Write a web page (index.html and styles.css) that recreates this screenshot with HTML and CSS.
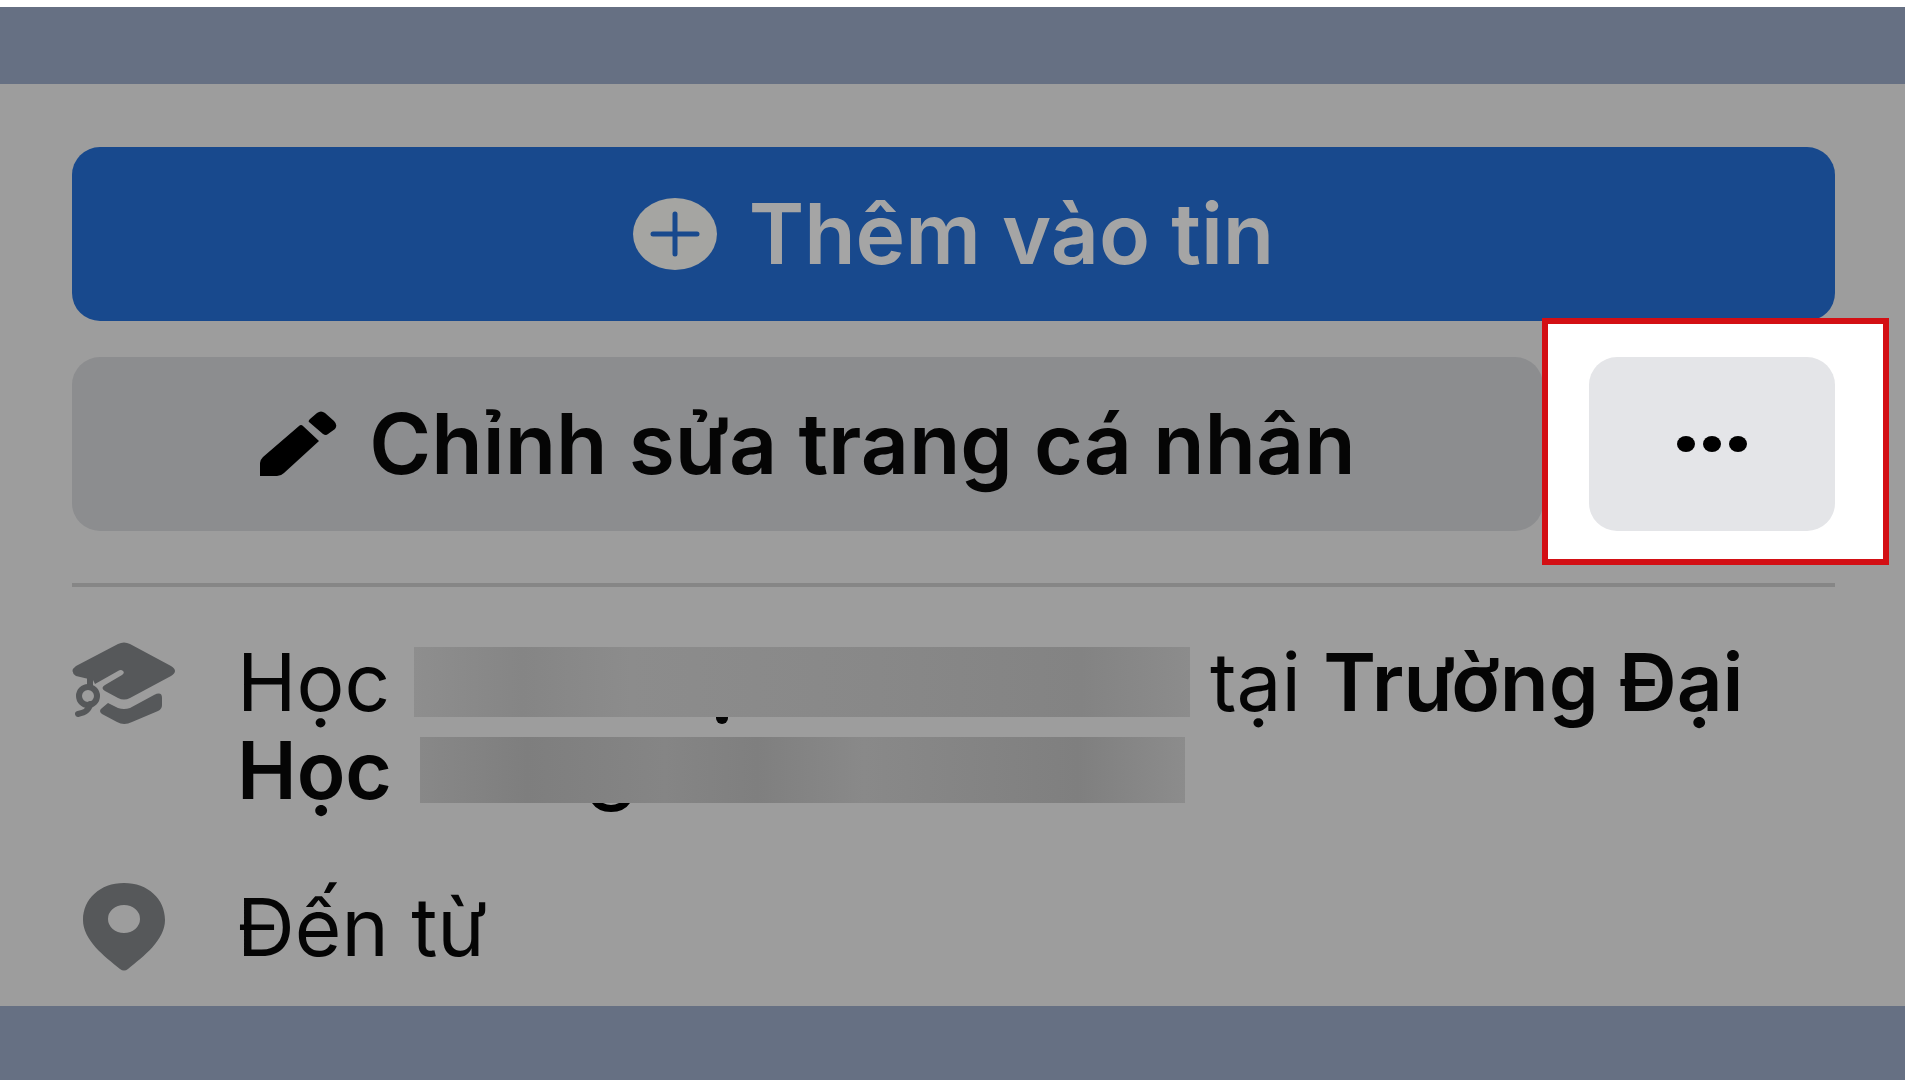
FILE: index.html
```
<!DOCTYPE html>
<html lang="vi">

<head>
    <meta charset="UTF-8">
    <meta name="viewport" content="width=device-width, initial-scale=1.0">
    <title>Trang cá nhân</title>
    <link rel="stylesheet" href="styles.css">
</head>

<body>
    <div class="screen">
        <div class="band"></div>

        <main class="profile">
            <button type="button" class="btn btn-story">
                <svg width="84" height="72" viewBox="0 0 84 72" aria-hidden="true">
                    <ellipse cx="42" cy="36" rx="42" ry="36" fill="#a5a5a2" />
                    <path d="M42 16V56M20 36H64" stroke="#18498d" stroke-width="5" stroke-linecap="round" />
                </svg>
                <span>Thêm vào tin</span>
            </button>

            <div class="actions">
                <button type="button" class="btn btn-edit">
                    <svg width="78" height="66" viewBox="0 0 78 66" aria-hidden="true">
                        <path d="M44 15L60 30L25 62Q22 65 18 65H1V52Q1 49 4 46L40 15Q42 13 44 15Z" />
                        <path d="M51 8L58 2Q62 -1 66 2L75 10Q79 14 76 18L69 23Q67 25 64 23L50 11Q49 10 51 8Z" />
                    </svg>
                    <span>Chỉnh sửa trang cá nhân</span>
                </button>
                <div class="spotlight">
                    <button type="button" class="btn btn-more" aria-label="Xem thêm">
                        <svg width="70" height="16" viewBox="0 0 70 16" aria-hidden="true">
                            <ellipse cx="9" cy="8" rx="9" ry="8" />
                            <ellipse cx="35" cy="8" rx="9" ry="8" />
                            <ellipse cx="61" cy="8" rx="9" ry="8" />
                        </svg>
                    </button>
                </div>
            </div>

            <hr>

            <ul class="info">
                <li>
                    <svg class="icon" width="104" height="84" viewBox="0 0 104 84" aria-hidden="true">
                        <path fill="#56585a" d="M46 2Q52 -1 58 2L99 24Q107 29 99 34L58 56Q52 59 46 56L33 49Q28 46 33 43L50 33Q53 31 51 29Q49 27 46 29L23 42L21 38L4 34Q-3 29 4 24Z" />
                        <path fill="#56585a" d="M36 61L46 66Q52 68 58 66L82 53Q90 49 90 56V63Q90 67 86 69L60 80Q52 84 45 80L30 72Q26 69 30 66Z" />
                        <path fill="none" stroke="#56585a" stroke-width="6" d="M18 36V45" />
                        <circle cx="16" cy="54" r="9" fill="none" stroke="#56585a" stroke-width="6" />
                        <path fill="none" stroke="#56585a" stroke-width="6" stroke-linecap="round" d="M18 62Q17 70 6 72" />
                    </svg>
                    <div class="school">
                        <span>Học</span>
                        <span class="redacted redacted-major"><i class="dot"></i></span>
                        <span class="place">tại <b>Trường Đại</b></span>
                        <b>Học</b>
                        <span class="redacted redacted-name">
                            <svg class="tail" width="38" height="9" viewBox="0 0 38 9" aria-hidden="true">
                                <path d="M0 0H11Q19 4 27 0H38Q32 9 19 9T0 0Z" />
                            </svg>
                        </span>
                    </div>
                </li>
                <li>
                    <svg class="icon" width="84" height="88" viewBox="0 0 84 88" aria-hidden="true">
                        <path fill="#56585a" fill-rule="evenodd" d="M42 0C66 0 83 16 83 37C83 57 62 73 46 86Q42 89 38 86C22 73 1 57 1 37C1 16 18 0 42 0ZM42 22A16 14 0 1 0 42 50A16 14 0 1 0 42 22Z" />
                    </svg>
                    <span>Đến từ</span>
                </li>
            </ul>
        </main>

        <div class="band band-bottom"></div>
    </div>
</body>

</html>
```
FILE: styles.css
```
* {
    box-sizing: border-box;
}

body {
    margin: 0;
    background-color: #fff;
    color: #050505;
    font-family: Inter, "Liberation Sans", sans-serif;
    font-size: 80px;
    line-height: 88px;
}

.screen {
    display: flex;
    flex-direction: column;
    min-height: 100vh;
    padding: 7px 15px 0 0;
}

.band {
    height: 77px;
    background-color: #667083;
}

.band-bottom {
    flex: 1;
    height: auto;
}

.profile {
    padding: 63px 70px 0 72px;
    background-color: #9d9d9d;
}

.btn {
    display: flex;
    align-items: center;
    justify-content: center;
    height: 174px;
    padding: 0;
    border: 0;
    border-radius: 28px;
    color: #050505;
    font: inherit;
    font-size: 84px;
    font-weight: 600;
    white-space: nowrap;
}

.btn-story {
    width: 100%;
    gap: 32px;
    background-color: #18498d;
    color: #a5a5a5;
}

.actions {
    display: flex;
    gap: 46px;
    margin-top: 36px;
}

.btn-edit {
    flex: 1;
    gap: 32px;
    background-color: #8c8d8f;
}

/* white frame with the red outline around the "more" button */
.spotlight {
    position: relative;
    width: 246px;
}

.spotlight::before {
    content: "";
    position: absolute;
    inset: -39px -54px -34px -47px;
    border: 6px solid #d30f14;
    background-color: #fff;
}

.btn-more {
    position: relative;
    width: 100%;
    background-color: #e4e5e8;
}

hr {
    height: 4px;
    margin: 52px 0 0;
    border: 0;
    background-color: #868686;
}

.info {
    margin: 0;
    padding: 51px 0 35px;
    list-style: none;
}

.info li {
    display: flex;
    align-items: center;
    gap: 61px;
}

.info li:first-child {
    align-items: flex-start;
}

.info li + li {
    margin-top: 69px;
}

.icon {
    flex: none;
    width: 104px;
}

.info li:first-child .icon {
    margin-top: 4px;
}

.info b {
    font-weight: 600;
}

.school {
    display: grid;
    grid-template-columns: 177px 776px auto;
    align-items: center;
    white-space: nowrap;
}

.place {
    padding-left: 20px;
}

.redacted {
    position: relative;
    height: 70px;
}

.redacted-major {
    background: linear-gradient(90deg, #8e8e8e, #858585 14%, #8c8c8c 28%, #888 60%, #838383 86%, #8c8c8c);
}

.redacted-name {
    width: 765px;
    height: 66px;
    margin-left: 6px;
    background: linear-gradient(90deg, #888, #7e7e7e 14%, #858585 32%, #7f7f7f 44%, #898989 58%, #7f7f7f 86%, #8c8c8c);
}

/* letter parts that stick out below the blurred words */
.dot,
.tail {
    position: absolute;
    top: 100%;
}

.dot {
    left: 302px;
    width: 12px;
    height: 7px;
    border-radius: 0 0 6px 6px;
    background-color: #050505;
}

.tail {
    left: 172px;
}
```
